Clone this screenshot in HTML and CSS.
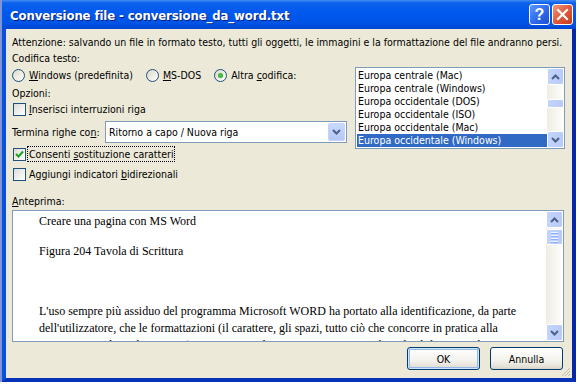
FILE: index.html
```html
<!DOCTYPE html>
<html lang="it">
<head>
    <meta charset="UTF-8">
    <title>Conversione file</title>
    <link rel="stylesheet" href="styles.css">
</head>
<body>

    <div class="window">

        <!-- Title bar -->
        <div class="titlebar">
            <span class="title">Conversione file - conversione_da_word.txt</span>
            <div class="tb-btn help">?</div>
            <div class="tb-btn close">
                <svg width="13" height="13" viewBox="0 0 13 13"><path d="M2 2 L11 11 M11 2 L2 11" stroke="#fff" stroke-width="2.2" stroke-linecap="square"/></svg>
            </div>
        </div>

        <div class="frame">
            <p class="warning">Attenzione: salvando un file in formato testo, tutti gli oggetti, le immagini e la formattazione del file andranno persi.</p>

            <div class="top">
                <!-- Options -->
                <div class="options">
                    <div class="label">Codifica testo:</div>
                    <div class="radios">
                        <div class="radio"><span class="rb"></span><span><u>W</u>indows (predefinita)</span></div>
                        <div class="radio"><span class="rb"></span><span><u>M</u>S-DOS</span></div>
                        <div class="radio"><span class="rb on"></span><span>Altra <u>c</u>odifica:</span></div>
                    </div>
                    <div class="label opz">Opzioni:</div>
                    <div class="check first"><span class="cb"></span><span><u>I</u>nserisci interruzioni riga</span></div>
                    <div class="endline">
                        <span>Termina righe co<u>n</u>:</span>
                        <div class="combo">
                            <span>Ritorno a capo / Nuova riga</span>
                            <div class="drop">
                                <svg width="9" height="6" viewBox="0 0 9 6"><path d="M1 1 L4.5 4.5 L8 1" stroke="#4D6185" stroke-width="2" fill="none"/></svg>
                            </div>
                        </div>
                    </div>
                    <div class="check">
                        <span class="cb">
                            <svg width="11" height="11" viewBox="0 0 11 11"><path d="M2 5 L4.5 7.5 L9 2.5" stroke="#21A121" stroke-width="2" fill="none"/></svg>
                        </span>
                        <span class="focus">Consenti <u>s</u>ostituzione caratteri</span>
                    </div>
                    <div class="check last"><span class="cb"></span><span>Aggiungi indicatori <u>b</u>idirezionali</span></div>
                </div>

                <!-- Encodings list -->
                <div class="listbox">
                    <div class="items">
                        <div class="item">Europa centrale (Mac)</div>
                        <div class="item">Europa centrale (Windows)</div>
                        <div class="item">Europa occidentale (DOS)</div>
                        <div class="item">Europa occidentale (ISO)</div>
                        <div class="item">Europa occidentale (Mac)</div>
                        <div class="item selected">Europa occidentale (Windows)</div>
                    </div>
                    <div class="scrollbar">
                        <div class="sb-btn"><svg width="9" height="6" viewBox="0 0 9 6"><path d="M1 5 L4.5 1.5 L8 5" stroke="#4D6185" stroke-width="2" fill="none"/></svg></div>
                        <div class="sb-track small"><div class="thumb"></div></div>
                        <div class="sb-btn"><svg width="9" height="6" viewBox="0 0 9 6"><path d="M1 1 L4.5 4.5 L8 1" stroke="#4D6185" stroke-width="2" fill="none"/></svg></div>
                    </div>
                </div>
            </div>

            <div class="label preview-label"><u>A</u>nteprima:</div>
            <div class="preview">
                <div class="doc">
                    <p>Creare una pagina con MS Word</p>
                    <p>&nbsp;</p>
                    <p>Figura 204 Tavola di Scrittura</p>
                    <p>&nbsp;</p>
                    <p>&nbsp;</p>
                    <p>&nbsp;</p>
                    <div class="para">
                        <p>L'uso sempre più assiduo del programma Microsoft WORD ha portato alla identificazione, da parte</p>
                        <p>dell'utilizzatore, che le formattazioni (il carattere, gli spazi, tutto ciò che concorre in pratica alla</p>
                        <p>impostazione di un documento) siano universalmente riconosciute, cioè applicabili con qualsiasi</p>
                    </div>
                </div>
                <div class="scrollbar">
                    <div class="sb-btn"><svg width="9" height="6" viewBox="0 0 9 6"><path d="M1 5 L4.5 1.5 L8 5" stroke="#4D6185" stroke-width="2" fill="none"/></svg></div>
                    <div class="sb-track"><div class="thumb big"><i></i><i></i><i></i><i></i></div></div>
                    <div class="sb-btn"><svg width="9" height="6" viewBox="0 0 9 6"><path d="M1 1 L4.5 4.5 L8 1" stroke="#4D6185" stroke-width="2" fill="none"/></svg></div>
                </div>
            </div>

            <div class="buttons">
                <div class="btn default">OK</div>
                <div class="btn">Annulla</div>
                <svg class="grip" width="10" height="10" viewBox="0 0 10 10"><path d="M9 1 L1 9 M9 4 L4 9 M9 7 L7 9" stroke="#C3BFAE" stroke-width="1"/></svg>
            </div>
        </div>
    </div>

</body>
</html>
```

FILE: styles.css
```css
html, body {
    margin: 0;
    padding: 0;
    background-color: #fff;
}

body {
    font-family: "DejaVu Sans Condensed", "DejaVu Sans", sans-serif;
    font-size: 10.5px;
    letter-spacing: 0;
    color: #000;
}

u {
    text-decoration: underline;
    text-underline-offset: 1px;
}

.window {
    width: 576px;
    height: 382px;
    box-sizing: border-box;
    border-left: 2px solid #7E95D6;
    display: flex;
    flex-direction: column;
}

/* Title bar */
.titlebar {
    height: 29px;
    display: flex;
    align-items: center;
    padding: 0 3px 0 8px;
    background: linear-gradient(#3F8CF3 0, #0D62EC 3px, #0058EE 45%, #0054E6 80%, #0046CF 100%);
    flex-shrink: 0;
}

.title {
    flex: 1;
    color: #fff;
    font-family: "DejaVu Sans Condensed", sans-serif;
    font-weight: bold;
    font-size: 13px;
    letter-spacing: -0.1px;
    text-shadow: 1px 1px 0 #0A1E78;
    padding-top: 1px;
}

.tb-btn {
    width: 21px;
    height: 21px;
    box-sizing: border-box;
    border: 1px solid #fff;
    border-radius: 3px;
    display: flex;
    align-items: center;
    justify-content: center;
    margin-left: 2px;
}

.help {
    background: linear-gradient(135deg, #5E97FF, #2A66E8 60%, #1D4FD0);
    color: #fff;
    font-family: "Liberation Sans", sans-serif;
    font-weight: bold;
    font-size: 16px;
}

.close {
    background: linear-gradient(135deg, #F29A7E, #E0593B 50%, #C73A1C);
}

/* Dialog body */
.frame {
    flex: 1;
    background-color: #ECE9D8;
    border: 4px solid #0A50DA;
    border-top: none;
    border-right-color: #0527A8;
    border-bottom-color: #0733B8;
    padding: 6px 7px 0 6px;
    position: relative;
}

.warning {
    margin: 0;
    line-height: 14px;
    white-space: nowrap;
}

.label {
    line-height: 14px;
}

.top {
    display: flex;
    justify-content: space-between;
    margin-top: 2px;
}

.options {
    width: 335px;
}

.radios {
    display: flex;
    margin-top: 3px;
    height: 14px;
}

.radio {
    display: flex;
    align-items: center;
    margin-right: 13px;
}

.rb {
    width: 13px;
    height: 13px;
    box-sizing: border-box;
    border: 1px solid #1C5180;
    border-radius: 50%;
    background: linear-gradient(135deg, #DCD9C7, #fff);
    margin-right: 4px;
    display: flex;
    align-items: center;
    justify-content: center;
}

.rb.on::after {
    content: "";
    width: 5px;
    height: 5px;
    border-radius: 50%;
    background: radial-gradient(#55D255, #1E9A1E);
}

.opz {
    margin-top: 4px;
}

.check {
    display: flex;
    align-items: center;
    height: 16px;
    margin-top: 3px;
}

.check.first {
    margin-top: 1px;
}

.check.last {
    margin-top: 4px;
}

.cb {
    width: 13px;
    height: 13px;
    box-sizing: border-box;
    border: 1px solid #1C5180;
    background: linear-gradient(135deg, #DCDCD6, #fff);
    margin: 0 3px 0 1px;
    display: flex;
    align-items: center;
    justify-content: center;
}

.focus {
    outline: 1px dotted #000;
    padding: 1px 0 1px 1px;
    margin-left: -1px;
}

.endline {
    display: flex;
    align-items: center;
    justify-content: space-between;
    margin-top: 4px;
}

.combo {
    width: 242px;
    height: 22px;
    box-sizing: border-box;
    border: 1px solid #7F9DB9;
    background-color: #fff;
    display: flex;
    align-items: center;
    justify-content: space-between;
    padding: 0 1px 0 3px;
}

.drop {
    width: 17px;
    height: 18px;
    box-sizing: border-box;
    border: 1px solid #C3D3FD;
    border-radius: 2px;
    background: linear-gradient(#C9D9FD, #B4C8F6);
    display: flex;
    align-items: center;
    justify-content: center;
}

/* List box */
.listbox {
    width: 210px;
    height: 82px;
    box-sizing: border-box;
    border: 1px solid #7F9DB9;
    background-color: #fff;
    display: flex;
    margin-top: 16px;
}

.items {
    flex: 1;
    padding: 1px 0 0 1px;
}

.item {
    height: 13px;
    line-height: 13px;
    padding-left: 1px;
}

.item.selected {
    background-color: #316AC5;
    color: #fff;
}

.scrollbar {
    width: 17px;
    display: flex;
    flex-direction: column;
    background: linear-gradient(to right, #EEEDE5, #FEFEFB);
}

.sb-btn {
    height: 17px;
    box-sizing: border-box;
    border: 1px solid #fff;
    border-radius: 2px;
    background: linear-gradient(to right, #C3D4FC, #B8CBF7);
    display: flex;
    align-items: center;
    justify-content: center;
    flex-shrink: 0;
}

.sb-track {
    flex: 1;
    padding-top: 1px;
}

.sb-track.small {
    padding-top: 14px;
}

.thumb {
    height: 9px;
    box-sizing: border-box;
    border: 1px solid #fff;
    border-radius: 2px;
    background: linear-gradient(to right, #C3D4FC, #B8CBF7);
}

.thumb.big {
    height: 16px;
    display: flex;
    flex-direction: column;
    align-items: center;
    justify-content: center;
    gap: 1px;
}

.thumb.big i {
    width: 7px;
    height: 1px;
    background-color: #EEF4FE;
    border-bottom: 1px solid #8CB0F8;
}

/* Preview */
.preview-label {
    margin-top: 12px;
}

.preview {
    height: 132px;
    box-sizing: border-box;
    border: 1px solid #7F9DB9;
    background-color: #fff;
    margin-top: 2px;
    margin-right: 1px;
    display: flex;
    overflow: hidden;
}

.doc {
    flex: 1;
    padding: 3px 0 0 26px;
    font-family: "Liberation Serif", serif;
    font-size: 12px;
    overflow: hidden;
    white-space: nowrap;
}

.doc p {
    margin: 0;
    line-height: 15px;
}

.doc .para {
    margin-top: -1px;
}

.doc .para p {
    line-height: 17px;
}

/* Buttons */
.buttons {
    display: flex;
    justify-content: flex-end;
    gap: 10px;
    margin-top: 5px;
    margin-right: 2px;
}

.btn {
    width: 73px;
    height: 23px;
    box-sizing: border-box;
    border: 1px solid #003C74;
    border-radius: 3px;
    background: linear-gradient(#FFFFFF, #F3F2EC 60%, #E3E0D6 90%, #D6D0C5);
    display: flex;
    align-items: center;
    justify-content: center;
}

.btn.default {
    box-shadow: inset 0 0 0 1px #CEE7FF, inset 0 0 0 2px #98B8EA;
}

.grip {
    position: absolute;
    right: 1px;
    bottom: 1px;
}
```
